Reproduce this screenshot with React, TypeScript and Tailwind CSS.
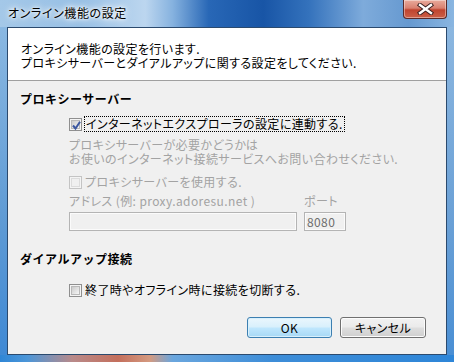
import React from 'react';

const ui = "font-['Noto_Sans_CJK_JP','Noto_Sans',sans-serif] [font-feature-settings:'palt'] tracking-[0.4px]";

const CheckBox: React.FC<{ checked?: boolean; disabled?: boolean }> = ({ checked, disabled }) => (
  <span
    className={`relative flex h-[13px] w-[13px] shrink-0 items-center justify-center border ${
      disabled ? 'border-[#c4c4c4] bg-[#f4f4f4]' : 'border-[#8f8f8f] bg-[#f4f4f4]'
    }`}
  >
    <span
      className={`h-[9px] w-[9px] ${
        disabled
          ? 'bg-[#f0f0f0] border border-[#dcdcdc]'
          : 'bg-[linear-gradient(135deg,#cbcbcb,#f6f6f6)] border border-[#b9b9b9]'
      }`}
    />
    {checked && (
      <svg className="absolute left-[1px] top-[1px]" width="11" height="11" viewBox="0 0 11 11">
        <path d="M2 5.5 L4.5 8.5 L9 1.8" fill="none" stroke="#3b57a0" strokeWidth="2" />
      </svg>
    )}
  </span>
);

const CloseButton = () => (
  <div className="mr-[7px] flex h-[19px] w-[44px] items-center justify-center rounded-b-[4px] border border-t-0 border-[#5a2a2a] bg-[linear-gradient(180deg,#e9ab9c_0%,#d98070_45%,#c0442f_55%,#cc6048_100%)] shadow-[inset_0_0_0_1px_rgba(255,255,255,0.4)]">
    <svg width="17" height="12" viewBox="0 0 17 12">
      <path d="M3 2 L14 10 M14 2 L3 10" stroke="#3a2020" strokeWidth="4.4" strokeLinecap="square" />
      <path d="M3 2 L14 10 M14 2 L3 10" stroke="#ffffff" strokeWidth="2.4" strokeLinecap="square" />
    </svg>
  </div>
);

export default function App() {
  return (
    <div className={`flex h-[362px] w-[454px] flex-col overflow-hidden bg-[#5f97d0] ${ui} text-[12px] leading-[14px] text-black`}>
      {/* title bar */}
      <div className="flex h-[27px] items-start justify-between bg-[linear-gradient(90deg,#a4c8e8_0%,#98c0e5_18%,#bcd6ef_32%,#86b2df_38%,#2867b6_46%,#1855a6_58%,#3472bc_68%,#7eabdb_80%,#6699d0_90%,#8ab6e1_100%)]">
        <div className="ml-[8px] mt-[6px] text-[12px] leading-[14px] tracking-[0.6px] [text-shadow:0_0_6px_#fff,0_0_10px_#fff,0_0_3px_#fff]">
          オンライン機能の設定
        </div>
        <CloseButton />
      </div>

      <div className="flex flex-1">
        <div className="w-[7px] bg-[linear-gradient(180deg,#8ab8e2,#5e9ad4_60%,#3f89d4)]" />
        {/* client area */}
        <div className="flex w-[440px] flex-col border border-[#2b4a6e] bg-[#f0f0f0]">
          <div className="h-[53px] border-b border-[#a0a0a0] bg-white pl-[13px] pt-[14px]">
            <p>オンライン機能の設定を行います.</p>
            <p>プロキシサーバーとダイアルアップに関する設定をしてください.</p>
          </div>

          <div className="flex flex-col pl-[12px] pr-[20px]">
            <h2 className="mt-[11px] h-[14px] font-bold tracking-[0.5px] [font-feature-settings:normal]">
              プロキシーサーバー
            </h2>

            <div className="ml-[49px] flex flex-col">
              <label className="mt-[10px] flex h-[16px] items-center gap-[2px]">
                <CheckBox checked />
                <span className="border border-dotted border-black px-[1px] leading-[14px]">
                  インターネットエクスプローラの設定に連動する.
                </span>
              </label>

              <div className="mt-[6px] text-[#a3a3a3]">
                <p>プロキシサーバーが必要かどうかは</p>
                <p>お使いのインターネット接続サービスへお問い合わせください.</p>
              </div>

              <label className="mt-[8px] flex h-[16px] items-center gap-[3px] text-[#a3a3a3]">
                <CheckBox disabled />
                <span>プロキシサーバーを使用する.</span>
              </label>

              <div className="mt-[4px] flex h-[14px] text-[#a3a3a3]">
                <span className="w-[235px]">アドレス (例: proxy.adoresu.net )</span>
                <span>ポート</span>
              </div>

              <div className="mt-[4px] flex gap-[7px]">
                <div className="h-[19px] w-[228px] border border-[#b4b4b4] bg-[#f0f0f0] shadow-[inset_0_0_0_1px_#fbfbfb]" />
                <div className="flex h-[19px] w-[42px] items-center border border-[#b4b4b4] bg-[#f0f0f0] pl-[2px] text-[#6d6d6d] shadow-[inset_0_0_0_1px_#fbfbfb]">
                  8080
                </div>
              </div>
            </div>

            <h2 className="mt-[21px] h-[14px] font-bold tracking-[0.5px] [font-feature-settings:normal]">
              ダイアルアップ接続
            </h2>

            <label className="ml-[49px] mt-[16px] flex h-[16px] items-center gap-[3px]">
              <CheckBox />
              <span>終了時やオフライン時に接続を切断する.</span>
            </label>

            <div className="mt-[19px] flex justify-end gap-[8px]">
              <button className="h-[21px] w-[85px] rounded-[3px] border border-[#3c7fb1] bg-[linear-gradient(180deg,#eaf6fd_0%,#d9f0fc_45%,#bee6fd_55%,#a7d9f5_100%)] text-[12px] shadow-[inset_0_0_0_1px_#d8f0fc]">
                OK
              </button>
              <button className="h-[21px] w-[86px] rounded-[3px] border border-[#707070] bg-[linear-gradient(180deg,#f2f2f2_0%,#ebebeb_45%,#dddddd_55%,#cfcfcf_100%)] text-[12px] shadow-[inset_0_0_0_1px_#fcfcfc]">
                キャンセル
              </button>
            </div>
          </div>
        </div>
        <div className="w-[7px] bg-[linear-gradient(180deg,#8cb7e0,#6aa0d6_60%,#4a8fd4)]" />
      </div>

      <div className="h-[7px] bg-[linear-gradient(90deg,#2f86d6_0%,#4c96d8_6%,#b98a8a_16%,#c46f5c_26%,#d49a80_33%,#6aa6de_38%,#3d8dd8_60%,#2e86d8_100%)]" />
    </div>
  );
}
